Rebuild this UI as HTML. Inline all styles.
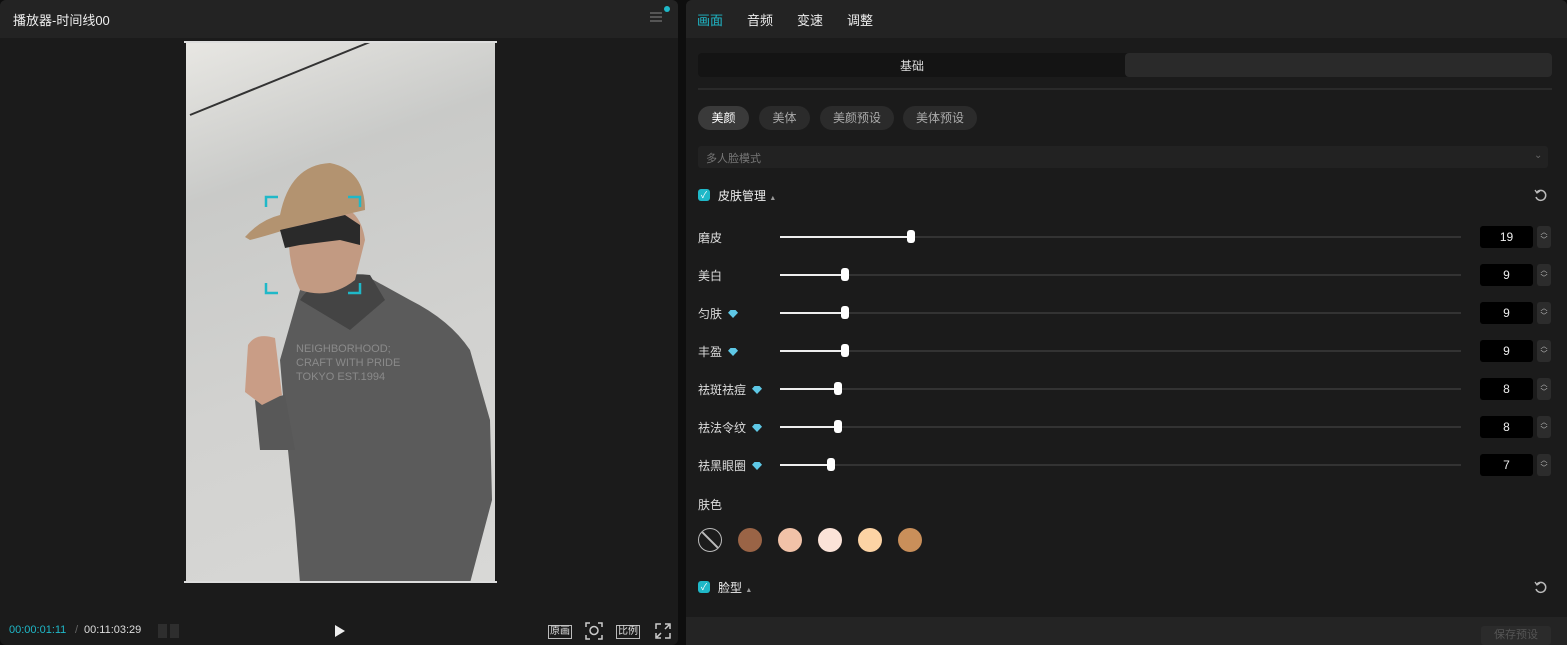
<!DOCTYPE html>
<html><head><meta charset="utf-8"><style>
*{margin:0;padding:0;box-sizing:border-box}
body{width:1567px;height:645px;background:#0e0e0e;font-family:"Liberation Sans","Noto Sans CJK SC",sans-serif;color:#e6e6e6;position:relative;overflow:hidden;font-size:12px}
.a{position:absolute}
.lab{position:absolute;left:698px;font-size:12px;color:#ddd}
.track{position:absolute;left:780px;width:681px;height:2px;background:#333}
.fill{position:absolute;left:0;top:0;height:2px;background:#eee}
.th{position:absolute;top:-6px;width:8px;height:13px;background:#fff;border-radius:3px;margin-left:-4px}
.inp{position:absolute;left:1480px;width:53px;height:22px;background:#000;border-radius:3px;color:#eee;font-size:12px;text-align:center;line-height:22px}
.stp{position:absolute;left:1537px;width:14px;height:22px;background:#2c2c2c;border-radius:3px;color:#ccc;font-size:7px;line-height:8px;text-align:center;padding-top:3px}
.dia{display:inline-block;width:10px;height:8px;background:#5ec8e6;clip-path:polygon(0 35%,25% 0,75% 0,100% 35%,50% 100%);margin-left:6px;vertical-align:0}
.sw{position:absolute;top:528px;width:24px;height:24px;border-radius:50%}
.chip{position:absolute;top:106px;height:24px;border-radius:12px;background:#2b2b2b;color:#aaa;font-size:12px;line-height:24px;text-align:center}
.cb{position:absolute;left:698px;width:12px;height:12px;border-radius:3px;background:#1fb8c8;color:#fff;font-size:9px;line-height:12px;text-align:center}
</style></head><body>
<div class="a" style="left:0;top:0;width:678px;height:645px;background:#1b1b1b;border-radius:6px"></div>
<div class="a" style="left:0;top:0;width:678px;height:38px;background:#232323;border-radius:6px 6px 0 0"></div>
<div class="a" style="left:13px;top:10px;font-size:13px;color:#eee">播放器-时间线00</div>
<div class="a" style="left:650px;top:12px;width:12px;height:1.5px;background:#555;box-shadow:0 4px 0 #555,0 8px 0 #555"></div>
<div class="a" style="left:664px;top:6px;width:6px;height:6px;border-radius:50%;background:#1fb8c8"></div>
<div class="a" style="left:186px;top:42px;width:309px;height:541px;overflow:hidden;background:linear-gradient(160deg,#e8e7e3 0%,#c9cac8 25%,#d2d2d0 60%,#d8d8d6 100%)">
<svg width="309" height="541" viewBox="186 42 309 541">
<line x1="190" y1="115" x2="370" y2="42" stroke="#333" stroke-width="2"/>
<path d="M300 290 Q330 280 370 278 L410 300 Q450 320 470 350 L490 420 L492 500 L470 583 L300 583 L295 520 L290 470 L285 420 L280 360 Z" fill="#5b5b5b"/>
<path d="M255 400 L285 395 L295 450 L260 450 Z" fill="#585858"/>
<path d="M248 345 Q256 332 275 338 L282 395 L262 405 L245 392 Z" fill="#c99d86"/>
<path d="M300 300 Q320 270 370 275 L385 300 L350 330 Z" fill="#444"/>
<path d="M290 215 Q285 260 300 290 Q330 300 355 280 L365 240 Q360 205 330 205 Z" fill="#c29a82"/>
<path d="M245 237 Q260 220 280 215 Q290 165 330 163 Q365 170 365 210 L300 225 Q270 235 250 240 Z" fill="#b39370"/>
<path d="M280 230 L345 215 L360 225 L360 245 L340 240 L300 245 L285 248 Z" fill="#2a2a2a"/>
<text x="296" y="352" font-size="11" fill="#8a8a8a" font-family="Liberation Sans">NEIGHBORHOOD;</text>
<text x="296" y="366" font-size="11" fill="#8a8a8a" font-family="Liberation Sans">CRAFT WITH PRIDE</text>
<text x="296" y="380" font-size="11" fill="#8a8a8a" font-family="Liberation Sans">TOKYO EST.1994</text>
<path d="M266 207 V197 H278 M348 197 H360 V207 M266 283 V293 H278 M348 293 H360 V283" stroke="#1fb8c8" stroke-width="2.5" fill="none"/>
</svg></div>
<div class="a" style="left:184px;top:41px;width:313px;height:2px;background:#ddd"></div>
<div class="a" style="left:184px;top:581px;width:313px;height:2px;background:#ddd"></div>
<div class="a" style="left:9px;top:624px;font-size:11px;color:#1fb8c8">00:00:01:11</div>
<div class="a" style="left:75px;top:624px;font-size:11px;color:#666">/</div>
<div class="a" style="left:84px;top:624px;font-size:11px;color:#ddd">00:11:03:29</div>
<div class="a" style="left:158px;top:624px;width:21px;height:14px;background:repeating-linear-gradient(90deg,#2e2e2e 0 9px,transparent 9px 12px)"></div>
<div class="a" style="left:335px;top:625px;width:0;height:0;border-left:10px solid #eee;border-top:6px solid transparent;border-bottom:6px solid transparent"></div>
<div class="a" style="left:548px;top:625px;width:24px;height:14px;border:1px solid #bbb;font-size:10px;line-height:12px;text-align:center;color:#ddd">原画</div>
<svg class="a" style="left:585px;top:622px" width="18" height="18"><path d="M1 5V1H5M13 1H17V5M1 13V17H5M13 17H17V13" stroke="#ccc" stroke-width="1.5" fill="none"/><circle cx="9" cy="8.5" r="4" stroke="#ccc" stroke-width="1.5" fill="none"/></svg>
<div class="a" style="left:616px;top:625px;width:24px;height:14px;border:1px solid #bbb;font-size:10px;line-height:12px;text-align:center;color:#ddd">比例</div>
<svg class="a" style="left:655px;top:623px" width="16" height="16"><path d="M1 6V1H6M10 1H15V6M1 10V15H6M10 15H15V10M2 14L6 10M14 2L10 6" stroke="#ccc" stroke-width="1.5" fill="none"/></svg>
<div class="a" style="left:686px;top:0;width:881px;height:645px;background:#1b1b1b;border-radius:6px"></div>
<div class="a" style="left:686px;top:0;width:881px;height:38px;background:#232323;border-radius:6px 6px 0 0"></div>
<div class="a" style="left:697px;top:10px;font-size:13px;color:#1fb8c8">画面</div>
<div class="a" style="left:747px;top:10px;font-size:13px;color:#eee">音频</div>
<div class="a" style="left:797px;top:10px;font-size:13px;color:#eee">变速</div>
<div class="a" style="left:847px;top:10px;font-size:13px;color:#eee">调整</div>
<div class="a" style="left:698px;top:53px;width:854px;height:24px;background:#141414;border-radius:4px"></div>
<div class="a" style="left:1125px;top:53px;width:427px;height:24px;background:#2a2a2a;border-radius:4px"></div>
<div class="a" style="left:900px;top:57px;font-size:12px;color:#ddd">基础</div>
<div class="a" style="left:698px;top:88px;width:854px;height:2px;background:#2a2a2a"></div>
<div class="chip" style="left:698px;width:51px;background:#3a3a3a;color:#fff">美颜</div>
<div class="chip" style="left:759px;width:51px">美体</div>
<div class="chip" style="left:820px;width:74px">美颜预设</div>
<div class="chip" style="left:903px;width:74px">美体预设</div>
<div class="a" style="left:698px;top:146px;width:850px;height:22px;background:#222;border-radius:3px"></div>
<div class="a" style="left:706px;top:150px;font-size:11px;color:#777">多人脸模式</div>
<div class="a" style="left:1534px;top:150px;font-size:10px;color:#666">⌄</div>
<div class="cb" style="top:189px">✓</div>
<div class="a" style="left:718px;top:187px;font-size:12px;color:#eee">皮肤管理 <span style="font-size:7px;color:#999">▲</span></div>
<svg class="a" style="left:1533px;top:188px" width="15" height="15"><path d="M4 4A5 5 0 1 1 3 9" stroke="#bbb" stroke-width="1.5" fill="none"/><path d="M2 2L4 5L7 3" stroke="#bbb" stroke-width="1.3" fill="none"/></svg>
<div class="lab" style="top:229px">磨皮</div>
<div class="track" style="top:236px"><div class="fill" style="width:131px"></div><div class="th" style="left:131px"></div></div>
<div class="inp" style="top:226px">19</div><div class="stp" style="top:226px">︿<br>﹀</div>
<div class="lab" style="top:267px">美白</div>
<div class="track" style="top:274px"><div class="fill" style="width:65px"></div><div class="th" style="left:65px"></div></div>
<div class="inp" style="top:264px">9</div><div class="stp" style="top:264px">︿<br>﹀</div>
<div class="lab" style="top:305px">匀肤<span class="dia"></span></div>
<div class="track" style="top:312px"><div class="fill" style="width:65px"></div><div class="th" style="left:65px"></div></div>
<div class="inp" style="top:302px">9</div><div class="stp" style="top:302px">︿<br>﹀</div>
<div class="lab" style="top:343px">丰盈<span class="dia"></span></div>
<div class="track" style="top:350px"><div class="fill" style="width:65px"></div><div class="th" style="left:65px"></div></div>
<div class="inp" style="top:340px">9</div><div class="stp" style="top:340px">︿<br>﹀</div>
<div class="lab" style="top:381px">祛斑祛痘<span class="dia"></span></div>
<div class="track" style="top:388px"><div class="fill" style="width:58px"></div><div class="th" style="left:58px"></div></div>
<div class="inp" style="top:378px">8</div><div class="stp" style="top:378px">︿<br>﹀</div>
<div class="lab" style="top:419px">祛法令纹<span class="dia"></span></div>
<div class="track" style="top:426px"><div class="fill" style="width:58px"></div><div class="th" style="left:58px"></div></div>
<div class="inp" style="top:416px">8</div><div class="stp" style="top:416px">︿<br>﹀</div>
<div class="lab" style="top:457px">祛黑眼圈<span class="dia"></span></div>
<div class="track" style="top:464px"><div class="fill" style="width:51px"></div><div class="th" style="left:51px"></div></div>
<div class="inp" style="top:454px">7</div><div class="stp" style="top:454px">︿<br>﹀</div>
<div class="lab" style="top:496px">肤色</div>
<div class="sw" style="left:698px;border:1.5px solid #bbb;overflow:hidden"><div style="position:absolute;left:10px;top:-4px;width:1.5px;height:30px;background:#bbb;transform:rotate(-45deg)"></div></div>
<div class="sw" style="left:738px;background:#9a6446"></div>
<div class="sw" style="left:778px;background:#f1c2a8"></div>
<div class="sw" style="left:818px;background:#fbe3d8"></div>
<div class="sw" style="left:858px;background:#fcd3a4"></div>
<div class="sw" style="left:898px;background:#c98f5a"></div>
<div class="cb" style="top:581px">✓</div>
<div class="a" style="left:718px;top:579px;font-size:12px;color:#eee">脸型 <span style="font-size:7px;color:#999">▲</span></div>
<svg class="a" style="left:1533px;top:580px" width="15" height="15"><path d="M4 4A5 5 0 1 1 3 9" stroke="#bbb" stroke-width="1.5" fill="none"/><path d="M2 2L4 5L7 3" stroke="#bbb" stroke-width="1.3" fill="none"/></svg>
<div class="a" style="left:686px;top:617px;width:881px;height:28px;background:#242424"></div>
<div class="a" style="left:1481px;top:626px;width:70px;height:19px;background:#2b2b2b;border-radius:3px;color:#555;font-size:11px;text-align:center;line-height:19px">保存预设</div>
</body></html>
